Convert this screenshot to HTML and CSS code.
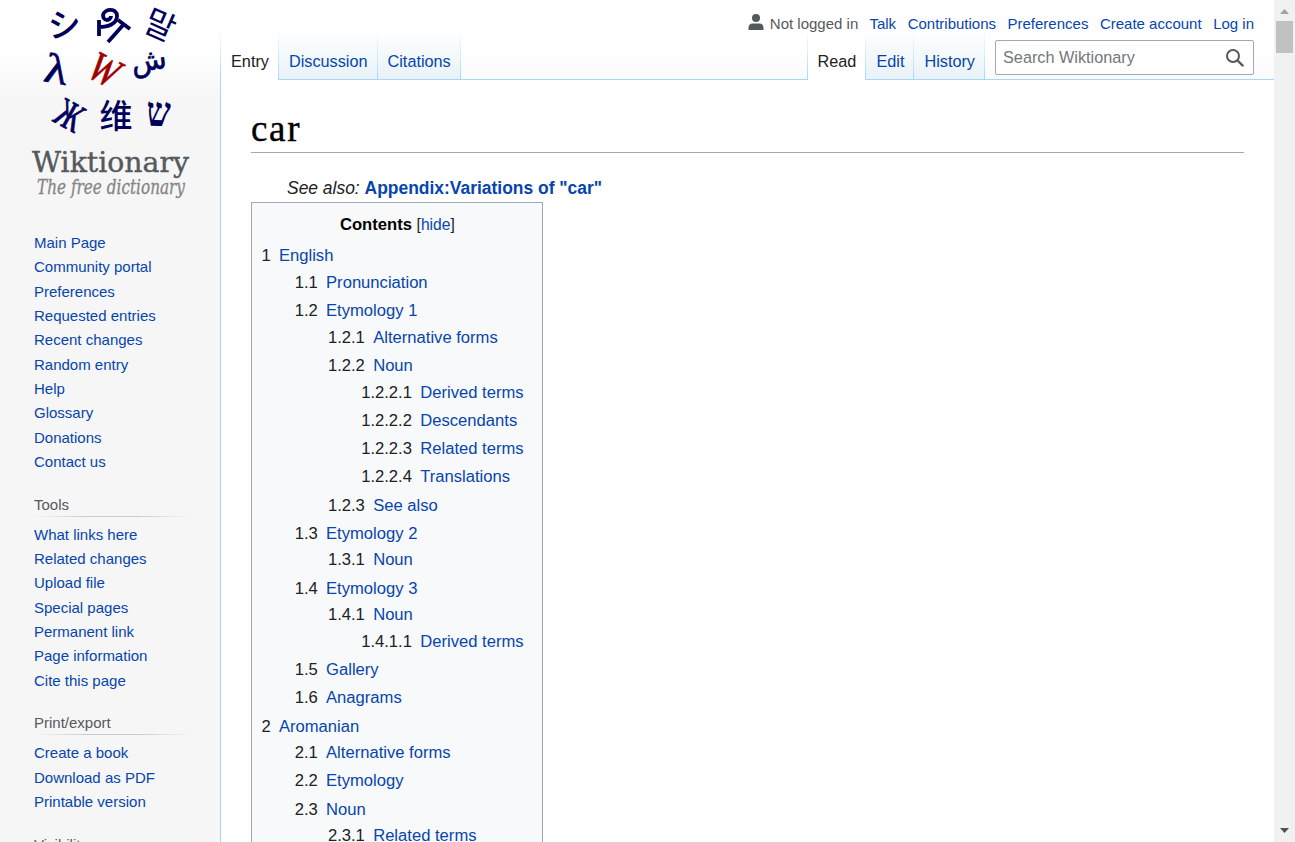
FILE: index.html
```html
<!DOCTYPE html>
<html lang="en">
<head>
<meta charset="utf-8">
<title>car - Wiktionary</title>
<link rel="stylesheet" href="styles.css">
</head>
<body>
<div class="window">
<aside class="sidebar">
  <a class="logo" aria-label="Wiktionary">
    <svg width="220" height="220" viewBox="0 0 220 220">
      <g class="logo-glyphs" text-anchor="middle">
        <text class="cjk" transform="translate(65 37) rotate(-3)" font-size="33">シ</text>
        <g fill="none" stroke="#00005c" stroke-width="3.8"><path d="M99 36V20M99 27C108 27 117 24 117 16C117 8 105 8 103 15C103 22 111 21 111 16"/><path d="M108 42L124 24M118 20l12 9"/></g>
        <text class="kr" transform="translate(155 36) rotate(24)" font-size="33">말</text>
        <text class="greek" transform="translate(54 83) rotate(10) scale(1.15 1)" font-size="42">λ</text>
        <text class="red" transform="translate(98 82) rotate(27) scale(.82 1)" font-size="42">W</text>
        <text class="arabic" transform="translate(150 70) rotate(-8)" font-size="29">ش</text>
        <text class="cyrillic" transform="translate(63 127) rotate(29) scale(.78 1.1)" font-size="37">Ж</text>
        <text class="cjk" transform="translate(116 128)" font-size="33">维</text>
        <text class="hebrew" transform="translate(158 126) rotate(2) scale(.95 1.15)" font-size="36">ש</text>
      </g>
      <text class="wordmark" x="32" y="172" font-size="28" textLength="157" lengthAdjust="spacingAndGlyphs">Wiktionary</text>
      <text class="tagline" x="37" y="194" font-size="19.5" textLength="148" lengthAdjust="spacingAndGlyphs">The free dictionary</text>
    </svg>
  </a>
  <nav class="portal first">
    <ul><li><a>Main Page</a></li><li><a>Community portal</a></li><li><a>Preferences</a></li><li><a>Requested entries</a></li><li><a>Recent changes</a></li><li><a>Random entry</a></li><li><a>Help</a></li><li><a>Glossary</a></li><li><a>Donations</a></li><li><a>Contact us</a></li></ul>
  </nav>
  <nav class="portal">
    <h3>Tools</h3>
    <ul><li><a>What links here</a></li><li><a>Related changes</a></li><li><a>Upload file</a></li><li><a>Special pages</a></li><li><a>Permanent link</a></li><li><a>Page information</a></li><li><a>Cite this page</a></li></ul>
  </nav>
  <nav class="portal">
    <h3>Print/export</h3>
    <ul><li><a>Create a book</a></li><li><a>Download as PDF</a></li><li><a>Printable version</a></li></ul>
  </nav>
  <nav class="portal"><h3>Visibility</h3></nav>
</aside>
<div class="main">
  <header class="head">
    <nav class="tabs left"><a class="selected">Entry</a><a>Discussion</a><a>Citations</a></nav>
    <div class="right-side">
      <ul class="personal">
        <li class="anon"><svg width="16" height="17" viewBox="0 0 16 17"><circle cx="8" cy="4" r="4" fill="#54595d"/><path d="M0.500 16v-2Q0.500 9.500 4.500 9.500h7q4 0 4 4.500v2z" fill="#54595d"/></svg>Not logged in</li>
        <li><a>Talk</a></li><li><a>Contributions</a></li><li><a>Preferences</a></li><li><a>Create account</a></li><li><a>Log in</a></li>
      </ul>
      <div class="actions">
        <nav class="tabs views"><a class="selected">Read</a><a>Edit</a><a>History</a></nav>
        <div class="search"><span>Search Wiktionary</span><svg width="18" height="18" viewBox="0 0 18 18" fill="none" stroke="#54595d" stroke-width="2"><circle cx="7" cy="7" r="6"/><path d="M11.3 11.3L17.2 17.2" stroke-width="2.3"/></svg></div>
      </div>
    </div>
  </header>
  <main class="content">
    <h1>car</h1>
    <div class="see-also"><i>See also:</i> <a>Appendix:Variations of "car"</a></div>
    <div class="toc">
      <div class="toc-title"><b>Contents</b> <span>[<a>hide</a>]</span></div>
      <ul>
        <li><a><span>1</span><em>English</em></a>
          <ul>
            <li><a><span>1.1</span><em>Pronunciation</em></a></li>
            <li><a><span>1.2</span><em>Etymology 1</em></a>
              <ul>
                <li><a><span>1.2.1</span><em>Alternative forms</em></a></li>
                <li><a><span>1.2.2</span><em>Noun</em></a>
                  <ul>
                    <li><a><span>1.2.2.1</span><em>Derived terms</em></a></li>
                    <li><a><span>1.2.2.2</span><em>Descendants</em></a></li>
                    <li><a><span>1.2.2.3</span><em>Related terms</em></a></li>
                    <li><a><span>1.2.2.4</span><em>Translations</em></a></li>
                  </ul>
                </li>
                <li><a><span>1.2.3</span><em>See also</em></a></li>
              </ul>
            </li>
            <li><a><span>1.3</span><em>Etymology 2</em></a>
              <ul><li><a><span>1.3.1</span><em>Noun</em></a></li></ul>
            </li>
            <li><a><span>1.4</span><em>Etymology 3</em></a>
              <ul><li><a><span>1.4.1</span><em>Noun</em></a>
                <ul><li><a><span>1.4.1.1</span><em>Derived terms</em></a></li></ul>
              </li></ul>
            </li>
            <li><a><span>1.5</span><em>Gallery</em></a></li>
            <li><a><span>1.6</span><em>Anagrams</em></a></li>
          </ul>
        </li>
        <li><a><span>2</span><em>Aromanian</em></a>
          <ul>
            <li><a><span>2.1</span><em>Alternative forms</em></a></li>
            <li><a><span>2.2</span><em>Etymology</em></a></li>
            <li><a><span>2.3</span><em>Noun</em></a>
              <ul><li><a><span>2.3.1</span><em>Related terms</em></a></li></ul>
            </li>
          </ul>
        </li>
      </ul>
    </div>
  </main>
</div>
<div class="scrollbar">
  <svg width="21" height="21" viewBox="0 0 21 21"><path d="M6 14l4.500-5 4.500 5z" fill="#a3a3a3"/></svg>
  <div class="thumb"></div>
  <svg class="down" width="21" height="21" viewBox="0 0 21 21"><path d="M6 7h9l-4.500 5z" fill="#505050"/></svg>
</div>
</div>
</body>
</html>
```
FILE: styles.css
```css
* { box-sizing: border-box; }
body { margin: 0; overflow: hidden; font-family: "Liberation Sans", Arial, sans-serif; color: #202122; }
a { color: #0645ad; text-decoration: none; }
ul { list-style: none; margin: 0; padding: 0; }

.window {
  display: grid;
  grid-template-columns: 220px 1fr 21px;
  height: 842px;
  overflow: hidden;
  background: #f6f6f6 linear-gradient(#fff 50%, #f6f6f6 100%) 0 0 / 100% 100px no-repeat;
}

/* Sidebar */
.sidebar { height: 842px; overflow: hidden; }
.logo svg { display: block; }
.logo-glyphs { fill: #00005c; }
.cjk { font-family: "Noto Sans CJK SC", sans-serif; font-weight: 500; }
.kr { font-family: "Noto Sans CJK KR", sans-serif; }
.greek { font-family: "Liberation Serif", serif; stroke: #00005c; stroke-width: .7px; }
.cyrillic { font-family: "Liberation Serif", serif; stroke: #00005c; stroke-width: .8px; }
.red { font-family: "Liberation Serif", serif; font-style: italic; fill: #a00000; stroke: #a00000; stroke-width: .8px; }
.arabic { font-family: "DejaVu Sans", sans-serif; stroke: #00005c; stroke-width: .6px; }
.hebrew { font-family: "Liberation Serif", serif; font-weight: bold; }
.wordmark { font-family: "DejaVu Serif", serif; fill: #54595d; stroke: #54595d; stroke-width: .4px; }
.tagline { font-family: "DejaVu Serif", serif; font-style: italic; fill: #858585; stroke: #858585; stroke-width: .3px; }
.portal { padding: 0 28px 0 34px; }
.portal.first { padding-top: 11.100px; }
.portal li { font-size: 15px; line-height: 16.875px; padding: 3.750px 0; }
.portal h3 {
  margin: 0 0 6.100px;
  padding-top: 18px;
  height: 41.900px;
  font-size: 15px;
  font-weight: normal;
  line-height: 24px;
  color: #54595d;
  background: linear-gradient(to right, rgba(200,204,209,0), #c8ccd1 33%, #c8ccd1 66%, rgba(200,204,209,0)) 0 100% / 100% 1px no-repeat;
}

/* Header */
.main { height: 842px; min-width: 0; overflow: hidden; }
.head { display: flex; justify-content: space-between; align-items: flex-end; height: 80px; border-bottom: 1px solid #a7d7f9; padding-right: 20px; }
.tabs { display: flex; margin-bottom: -1px; height: 50px; font-size: 16.250px; line-height: 20px; }
.tabs a {
  height: 50px;
  padding: 21px 10px 0 10px;
  background:
    linear-gradient(#fff, #a7d7f9) 100% 0 / 1px 100% no-repeat,
    linear-gradient(#a7d7f9, #a7d7f9) 0 100% / 100% 1px no-repeat,
    linear-gradient(#fff, #e8f2f8);
}
.tabs .selected { color: #202122; background: linear-gradient(#fff, #a7d7f9) 100% 0 / 1px 100% no-repeat, #fff; }
.tabs.left, .tabs.views { padding-left: 1px; background: linear-gradient(#fff, #a7d7f9) 0 0 / 1px 100% no-repeat; }
.right-side { height: 79px; }
.personal { position: relative; z-index: 1; display: flex; justify-content: flex-end; gap: 11.500px; height: 30px; padding-top: 14px; font-size: 15px; line-height: 20px; }
.anon { display: flex; gap: 5.500px; color: #54595d; margin-right: -.3px; }
.actions { display: flex; justify-content: flex-end; gap: 10px; }
.search {
  display: flex; justify-content: space-between; align-items: center;
  width: 259px; height: 35px; margin-top: 10px; padding: 0 9px 0 7px;
  border: 1px solid #a2a9b1; border-radius: 2px; background: #fff;
  font-size: 16.250px; color: #72777d;
}

/* Article */
.content { height: 762px; padding: 25px 30px 0; border-left: 1px solid #a7d7f9; background: #fff; }
h1 {
  margin: 0; height: 48px; border-bottom: 1px solid #a2a9b1;
  font: 37px/48px "Liberation Serif", serif; letter-spacing: 1.700px; color: #000;
  -webkit-text-stroke: .4px #000;
}
.see-also { padding: 21px 0 0 36px; height: 49px; font-size: 17.450px; line-height: 28px; }
.see-also a { font-weight: bold; }
.toc { width: 292px; padding: 8.700px 8.700px 8px 9.400px; border: 1px solid #a2a9b1; background: #f8f9fa; font-size: 16.625px; line-height: 26.600px; }
.toc-title { text-align: center; color: #000; }
.toc-title span { font-size: 15.625px; color: #202122; }
.toc ul { margin: 4.950px 0 0; }
.toc ul ul { margin: 0 0 0 33.250px; }
.toc li { margin-bottom: 1.660px; }
.toc li > a { display: table; }
.toc li span { display: table-cell; padding-right: 8.300px; color: #202122; }
.toc em { display: table-cell; font-style: normal; }

/* Scrollbar */
.scrollbar { display: flex; flex-direction: column; height: 842px; background: #f1f1f1; }
.thumb { width: 17px; height: 32px; margin-left: 2px; background: #c1c1c1; }
.down { margin-top: auto; }
```
